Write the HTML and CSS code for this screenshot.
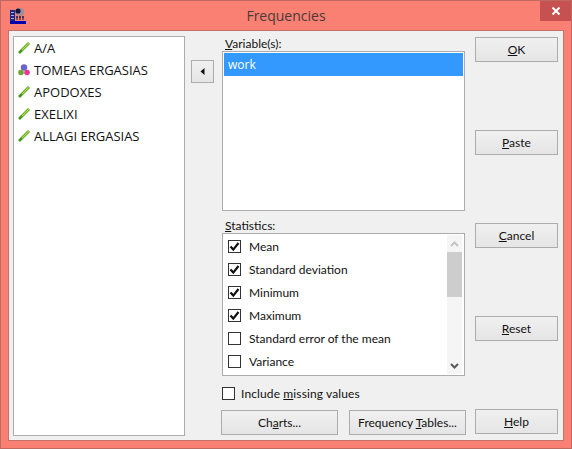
FILE: index.html
```html
<!DOCTYPE html>
<html lang="en">
<head>
  <meta charset="UTF-8" />
  <title>Frequencies</title>
  <link rel="stylesheet" href="styles.css">
</head>
<body>
  <svg class="defs" width="0" height="0">
    <symbol id="scale" viewBox="0 0 12 12">
      <path d="M1 11 L11 1" stroke="#3f9a1c" stroke-width="2.6"/>
      <path d="M4 8 L11 1" stroke="#b4dc3c" stroke-width="1.2"/>
    </symbol>
    <symbol id="nominal" viewBox="0 0 12 12">
      <circle cx="6" cy="3.5" r="3.2" fill="#6a63cf"/>
      <circle cx="3" cy="8.5" r="2.8" fill="#6fa63a"/>
      <circle cx="9" cy="8.5" r="2.8" fill="#e8388f"/>
    </symbol>
    <symbol id="tick" viewBox="0 0 13 13">
      <path d="M2.5 6.5 L5.3 9.6 L10.5 3" fill="none" stroke="#111" stroke-width="2.2"/>
    </symbol>
  </svg>

  <div class="window">
    <div class="titlebar">
      <svg class="app-icon" width="16" height="16" viewBox="0 0 16 16">
        <rect x="0" y="2" width="5" height="11" fill="#1a2a8c"/>
        <rect x="1" y="4" width="3" height="1" fill="#9fb0e8"/>
        <rect x="1" y="7" width="3" height="1" fill="#9fb0e8"/>
        <rect x="1" y="10" width="3" height="1" fill="#9fb0e8"/>
        <circle cx="10" cy="4" r="4" fill="#9a8f9a"/>
        <circle cx="8" cy="3" r="2.6" fill="#16163f"/>
        <path d="M7 8v4M6 9h2M10 8v4M9 9h2M13 8v4M12 9h2" stroke="#16163f"/>
        <rect x="0" y="13" width="16" height="3" fill="#0000b0"/>
      </svg>
      <div class="title">Frequencies</div>
      <div class="close">
        <svg width="10" height="10" viewBox="0 0 10 10">
          <path d="M1.5 1.5 L8.5 8.5 M8.5 1.5 L1.5 8.5" stroke="#fff" stroke-width="2"/>
        </svg>
      </div>
    </div>

    <div class="dialog">
      <div class="source-list">
        <div class="var-row"><svg class="var-icon"><use href="#scale"/></svg>A/A</div>
        <div class="var-row"><svg class="var-icon"><use href="#nominal"/></svg>TOMEAS ERGASIAS</div>
        <div class="var-row"><svg class="var-icon"><use href="#scale"/></svg>APODOXES</div>
        <div class="var-row"><svg class="var-icon"><use href="#scale"/></svg>EXELIXI</div>
        <div class="var-row"><svg class="var-icon"><use href="#scale"/></svg>ALLAGI ERGASIAS</div>
      </div>

      <button class="btn arrow-btn">
        <svg width="5" height="7" viewBox="0 0 5 7"><path d="M4.5 0 V7 L0.5 3.5 Z" fill="#111"/></svg>
      </button>

      <div class="center">
        <div class="field-label"><u>V</u>ariable(s):</div>
        <div class="target-list">
          <div class="selected">work</div>
        </div>

        <div class="field-label stats-label"><u>S</u>tatistics:</div>
        <div class="stats-box">
          <div class="stats-rows">
            <div class="stat-row"><span class="checkbox"><svg width="13" height="13"><use href="#tick"/></svg></span>Mean</div>
            <div class="stat-row"><span class="checkbox"><svg width="13" height="13"><use href="#tick"/></svg></span>Standard deviation</div>
            <div class="stat-row"><span class="checkbox"><svg width="13" height="13"><use href="#tick"/></svg></span>Minimum</div>
            <div class="stat-row"><span class="checkbox"><svg width="13" height="13"><use href="#tick"/></svg></span>Maximum</div>
            <div class="stat-row"><span class="checkbox"></span>Standard error of the mean</div>
            <div class="stat-row"><span class="checkbox"></span>Variance</div>
          </div>
          <div class="scrollbar">
            <svg class="scroll-arrow" width="9" height="6" viewBox="0 0 9 6"><path d="M1 5 L4.5 1.5 L8 5" fill="none" stroke="#c4c4c4" stroke-width="2"/></svg>
            <div class="scroll-thumb"></div>
            <svg class="scroll-arrow down" width="9" height="6" viewBox="0 0 9 6"><path d="M1 1 L4.5 4.5 L8 1" fill="none" stroke="#5a5a5a" stroke-width="2"/></svg>
          </div>
        </div>

        <div class="missing-row"><span class="checkbox"></span><span class="missing-text">Include <u>m</u>issing values</span></div>

        <div class="bottom-btns">
          <button class="btn wide-btn">Ch<u>a</u>rts...</button>
          <button class="btn wide-btn">Frequency <u>T</u>ables...</button>
        </div>
      </div>

      <div class="actions">
        <button class="btn action-btn"><u>O</u>K</button>
        <button class="btn action-btn"><u>P</u>aste</button>
        <button class="btn action-btn"><u>C</u>ancel</button>
        <button class="btn action-btn"><u>R</u>eset</button>
        <button class="btn action-btn"><u>H</u>elp</button>
      </div>
    </div>
  </div>
</body>
</html>
```

FILE: styles.css
```css
html, body {
  margin: 0;
  padding: 0;
}
body {
  font-family: Lato, "Open Sans", sans-serif;
  font-size: 12px;
  color: #111;
  background: #f98072;
}
.defs {
  display: block;
  height: 0;
}
.window {
  box-sizing: border-box;
  width: 572px;
  height: 449px;
  border: 1px solid #bf6a60;
  background: #f98072;
  padding: 0 7px 7px 7px;
  display: flex;
  flex-direction: column;
}
.titlebar {
  height: 29px;
  display: flex;
  align-items: flex-start;
  flex: none;
}
.app-icon {
  margin: 7px 0 0 2px;
  flex: none;
}
.title {
  flex: 1;
  text-align: center;
  font-family: "Open Sans", sans-serif;
  font-size: 14px;
  line-height: 20px;
  margin-top: 5px;
  padding-left: 6px;
  color: #4a3a38;
}
.close {
  width: 31px;
  height: 20px;
  margin-right: -7px;
  margin-left: 0;
  background: #c75050;
  display: flex;
  align-items: center;
  justify-content: center;
  flex: none;
}
.dialog {
  flex: 1;
  display: flex;
  align-items: stretch;
  box-sizing: border-box;
  background: #f0f0f0;
  border: 1px solid #c4736a;
  padding: 5px 5px 4px 4px;
}
.source-list {
  box-sizing: border-box;
  width: 172px;
  height: 400px;
  flex: none;
  background: #fff;
  border: 1px solid #acacac;
  padding: 0 0 0 4px;
  font-family: "Open Sans", sans-serif;
  font-size: 13px;
}
.var-row {
  height: 22px;
  display: flex;
  align-items: center;
  white-space: nowrap;
}
.var-icon {
  width: 12px;
  height: 12px;
  margin-right: 4px;
  flex: none;
}
.btn {
  box-sizing: border-box;
  font: inherit;
  color: #111;
  padding: 0;
  border: 1px solid #acacac;
  background: linear-gradient(#f0f0f0, #e5e5e5);
}
.arrow-btn {
  width: 23px;
  height: 23px;
  margin: 24px 0 0 6px;
  flex: none;
  display: flex;
  align-items: center;
  justify-content: center;
}
.center {
  width: 245px;
  margin-left: 7px;
  flex: none;
  display: flex;
  flex-direction: column;
}
.field-label {
  height: 14px;
  line-height: 14px;
  margin: 1px 0 0 4px;
}
.target-list {
  box-sizing: border-box;
  width: 243px;
  height: 160px;
  margin-left: 1px;
  background: #fff;
  border: 1px solid #acacac;
  padding: 1px;
}
.selected {
  height: 23px;
  line-height: 23px;
  padding-left: 4px;
  background: #3399ff;
  color: #fff;
  font-family: "Open Sans", sans-serif;
}
.stats-label {
  margin-top: 8px;
}
.stats-box {
  box-sizing: border-box;
  width: 243px;
  height: 143px;
  margin-left: 1px;
  background: #fff;
  border: 1px solid #acacac;
  display: flex;
}
.stats-rows {
  flex: 1;
  padding: 1px 0 0 5px;
}
.stat-row {
  height: 23px;
  display: flex;
  align-items: center;
  white-space: nowrap;
}
.checkbox {
  box-sizing: border-box;
  width: 13px;
  height: 13px;
  flex: none;
  border: 1px solid #333;
  background: #fff;
  margin-right: 8px;
  display: flex;
  align-items: center;
  justify-content: center;
}
.checkbox svg {
  flex: none;
}
.scrollbar {
  width: 15px;
  margin: 1px 2px 1px 0;
  background: #f5f5f5;
  display: flex;
  flex-direction: column;
  align-items: center;
}
.scroll-arrow {
  margin-top: 6px;
  flex: none;
}
.scroll-arrow.down {
  margin-top: auto;
  margin-bottom: 5px;
}
.scroll-thumb {
  width: 15px;
  height: 45px;
  margin-top: 5px;
  background: #cdcdcd;
}
.missing-row {
  height: 13px;
  margin: 11px 0 0 1px;
  display: flex;
  align-items: center;
  white-space: nowrap;
}
.missing-row .checkbox {
  margin-right: 6px;
}
.missing-text {
  letter-spacing: 0.12px;
}
.bottom-btns {
  display: flex;
  gap: 11px;
  margin-top: 10px;
}
.wide-btn {
  width: 117px;
  height: 25px;
}
.actions {
  width: 83px;
  margin: 1px 0 2px 9px;
  flex: none;
  display: flex;
  flex-direction: column;
  justify-content: space-between;
}
.action-btn {
  height: 25px;
}
```
